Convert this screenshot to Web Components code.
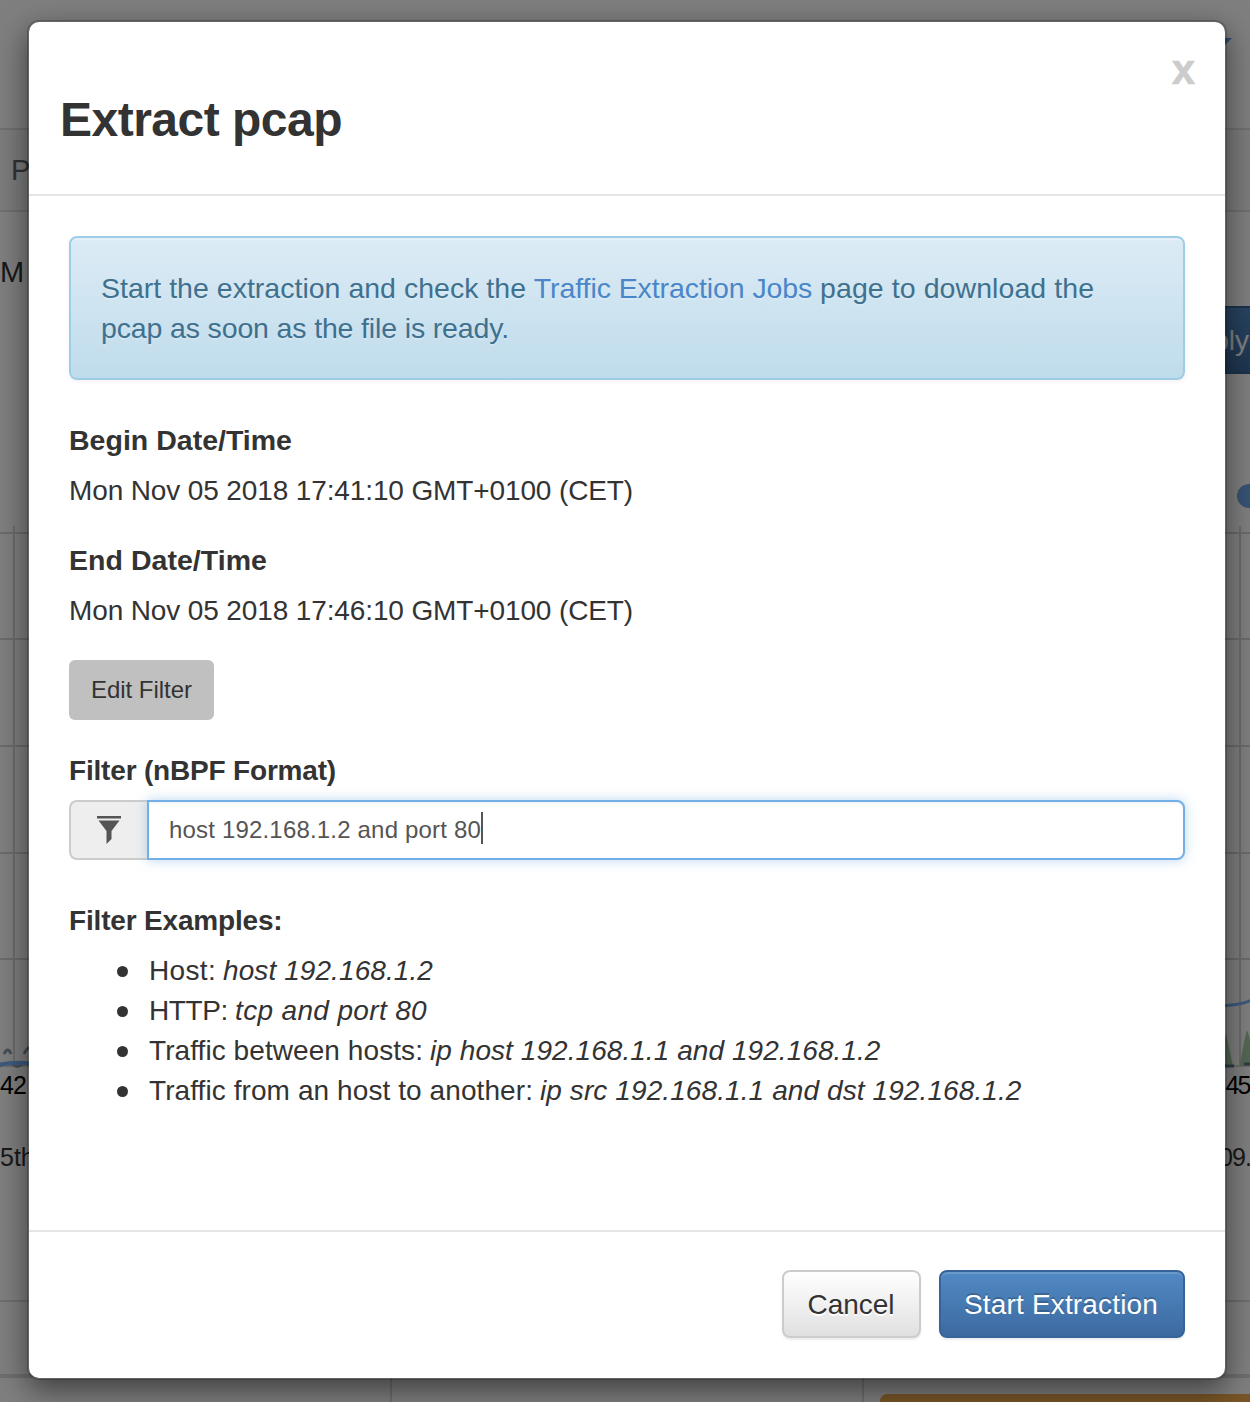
<!DOCTYPE html>
<html lang="en"><head><meta charset="utf-8"><title>Extract pcap</title>
<style>
html,body{margin:0;height:1402px;overflow:hidden;background:#fff}
body{font:28px/40px "Liberation Sans",Arial,sans-serif;color:#333;position:relative}
</style></head><body>
<traffic-page></traffic-page>
<modal-dialog>
  <span slot="title"><fit-text width="282">Extract pcap</fit-text></span>
  <info-alert>
    <div><fit-text width="425" size="28.5">Start the extraction and check the</fit-text><span>&nbsp;</span><a style="color:#4a86c8"><fit-text width="278.5" size="28.5">Traffic Extraction Jobs</fit-text></a><span>&nbsp;</span><fit-text width="274" size="28.5">page to download the</fit-text></div>
    <div><fit-text width="408" size="28.5">pcap as soon as the file is ready.</fit-text></div>
  </info-alert>
  <field-row><fit-text slot="label" width="223" size="28.5">Begin Date/Time</fit-text><fit-text width="564">Mon Nov 05 2018 17:41:10 GMT+0100 (CET)</fit-text></field-row>
  <field-row><fit-text slot="label" width="198" size="28.5">End Date/Time</fit-text><fit-text width="564">Mon Nov 05 2018 17:46:10 GMT+0100 (CET)</fit-text></field-row>
  <ui-button kind="small"><fit-text width="101">Edit Filter</fit-text></ui-button>
  <filter-field><fit-text slot="label" width="267">Filter (nBPF Format)</fit-text><fit-text width="312">host 192.168.1.2 and port 80</fit-text></filter-field>
  <filter-examples>
    <fit-text slot="label" width="213.5">Filter Examples:</fit-text>
    <example-item><fit-text slot="name" width="67">Host:</fit-text><fit-text width="210">host 192.168.1.2</fit-text></example-item>
    <example-item><fit-text slot="name" width="79">HTTP:</fit-text><fit-text width="192">tcp and port 80</fit-text></example-item>
    <example-item><fit-text slot="name" width="274">Traffic between hosts:</fit-text><fit-text width="450.5">ip host 192.168.1.1 and 192.168.1.2</fit-text></example-item>
    <example-item><fit-text slot="name" width="384">Traffic from an host to another:</fit-text><fit-text width="481.5">ip src 192.168.1.1 and dst 192.168.1.2</fit-text></example-item>
  </filter-examples>
  <ui-button slot="footer" kind="default"><fit-text width="87">Cancel</fit-text></ui-button>
  <ui-button slot="footer" kind="primary"><fit-text width="194">Start Extraction</fit-text></ui-button>
</modal-dialog>
<script>
const define=(name,html,init)=>customElements.define(name,class extends HTMLElement{
  constructor(){super();this.attachShadow({mode:'open'}).innerHTML=html}
  connectedCallback(){if(init)init(this)}
});
define('traffic-page',`<style>:host{display:block;position:absolute;inset:0}svg{display:block}text{font-family:"Liberation Sans",Arial,sans-serif}</style>
<svg width="1250" height="1402" viewBox="0 0 1250 1402">
<defs><linearGradient id="b" x2="0" y2="1"><stop stop-color="#5189c5"/><stop offset="1" stop-color="#3c6a9f"/></linearGradient></defs>
<rect y="129" width="1250" height="82" fill="#f8f8f8"/>
<g fill="#e0e0e0"><rect y="128" width="1250" height="2"/><rect y="210" width="1250" height="2"/></g>
<path d="M1210 38h22l-11 11z" fill="#5f9ce0"/>
<text x="11" y="180" font-size="29" fill="#666">P</text><text x="0" y="282" font-size="29" fill="#333">M</text>
<path d="M1150 306h100v68h-100z" fill="url(#b)"/><path d="M1150 307h100" stroke="#36649a" stroke-width="2"/><path d="M1150 373h100" stroke="#36649a" stroke-width="2"/>
<text x="1249" y="350" font-size="28" text-anchor="end" fill="#fff">Apply</text>
<circle cx="1249" cy="496" r="12" fill="#6fa8e8"/>
<g stroke="#d6d6d6" stroke-width="2"><path d="M0 533h1250M0 639h1250M0 746h1250M0 853h1250M0 959h1250M0 1066h1250M14 526v540M1240 526v540"/></g>
<g fill="none" stroke="#8b9cae" stroke-width="3"><path d="M4 1054q4-8 7 0M24 1054q4-9 8-5M-2 1066q4 0 5-3M13 1064q4 5 9 0"/></g>
<path d="M-2 1065Q15 1061 32 1064" fill="none" stroke="#7ab4fb" stroke-width="4"/>
<path d="M1220 1066l6-33 7 33zM1240 1066q4-26 7-36 4 9 8 36z" fill="#a6cfa8"/>
<path d="M1223 1066h11M1244 1064h8" stroke="#657689" stroke-width="3"/>
<path d="M1220 1006Q1242 1005 1252 1000" fill="none" stroke="#7ab4fb" stroke-width="3"/>
<g font-size="25" fill="#000"><text x="0" y="1094" textLength="27">42</text><text x="1225.5" y="1094" textLength="26">45</text></g>
<g font-size="25" fill="#333"><text x="0" y="1166">5th</text><text x="1219" y="1166" textLength="33">09.</text></g>
<path d="M0 1301h1250" stroke="#ddd" stroke-width="2"/><path d="M0 1376h1250" stroke="#ddd" stroke-width="4"/><path d="M391 1378v24M863 1378v24" stroke="#ddd" stroke-width="2"/>
<path d="M880 1402q0-8 8-8h362v8z" fill="#f0ad4e"/>
</svg>`);
define('modal-dialog',`<style>
:host{display:flex;position:absolute;inset:0;background:rgba(0,0,0,.5);padding:20px 23px 22px 27px;box-sizing:border-box}
section{flex:1;display:flex;flex-direction:column;background:#fff;background-clip:padding-box;border:2px solid rgba(0,0,0,.2);border-radius:12px;box-shadow:0 10px 30px rgba(0,0,0,.5);box-sizing:border-box}
header{height:174px;box-sizing:border-box;border-bottom:2px solid #e5e5e5;padding:27px 30px 30px;display:flex;flex-direction:column}
.x{align-self:flex-end;font:bold 42px/42px "Liberation Sans",Arial,sans-serif;height:42px;color:#ccc;-webkit-text-stroke:.6px #ccc}
h3{margin:3px 0 0 1px;font-size:48px;line-height:52px;font-weight:bold}
main{flex:1;padding:40px;display:flex;flex-direction:column;align-items:stretch}
footer{height:148px;box-sizing:border-box;border-top:2px solid #e5e5e5;padding:38px 40px 40px;display:flex;justify-content:flex-end;gap:18px}
</style><section><header><span class="x">x</span><h3><slot name="title"></slot></h3></header><main><slot></slot></main><footer><slot name="footer"></slot></footer></section>`);
define('info-alert',`<style>:host{display:block;height:144px;box-sizing:border-box;padding:30px;border:2px solid #9fcde8;border-radius:8px;background:linear-gradient(#dcebf5,#bfdcec);color:#3f718f;text-shadow:0 2px 0 rgba(255,255,255,.2);box-shadow:inset 0 2px 0 rgba(255,255,255,.25),0 2px 4px rgba(0,0,0,.05);margin-bottom:40px;white-space:nowrap}</style><slot></slot>`);
define('field-row',`<style>:host{display:flex;flex-direction:column;margin-bottom:30px;height:90px}b{height:51px}div{height:39px}</style><b><slot name="label"></slot></b><div><slot></slot></div>`);
define('ui-button',`<style>
:host{display:flex;align-items:center;justify-content:center;box-sizing:border-box;border-radius:8px;height:68px}
:host([kind=small]){width:145px;height:60px;flex:none;background:silver;border-radius:6px;font-size:24px;margin-bottom:30px}
:host([kind=default]){width:139px;border:2px solid #ccc;padding:1px 1px 0 0;background:linear-gradient(#fff,#e0e0e0);text-shadow:0 2px 0 #fff;box-shadow:inset 0 2px 0 rgba(255,255,255,.15),0 2px 2px rgba(0,0,0,.075)}
:host([kind=primary]){width:246px;border:2px solid #36649a;padding:1px 2px 0 0;background:linear-gradient(#5189c5,#3c6a9f);color:#fff;text-shadow:0 -2px 0 rgba(0,0,0,.2);box-shadow:inset 0 2px 0 rgba(255,255,255,.15),0 2px 2px rgba(0,0,0,.075)}
</style><slot></slot>`);
define('filter-field',`<style>
:host{display:flex;flex-direction:column;margin-bottom:40px;height:110px}
b{height:50px;padding-top:1px;box-sizing:border-box}.g{display:flex;height:60px}
.i{width:78px;box-sizing:border-box;border:2px solid #ccc;border-right:0;border-radius:8px 0 0 8px;background:#eee;display:flex;align-items:center;justify-content:center}
.v{flex:1;display:flex;align-items:center;border:2px solid #73aee6;border-radius:0 8px 8px 0;background:#fff;padding-left:20px;font-size:24px;color:#555;box-shadow:inset 0 2px 2px rgba(0,0,0,.04),0 0 12px rgba(115,174,230,.5)}
.c{width:2px;height:32px;background:#555;margin-bottom:4px}
</style><b><slot name="label"></slot></b><div class="g"><span class="i"><svg width="24" height="28" viewBox="0 0 24 28" fill="#555"><path d="M0 0h24v2.5H0zM1.5 4.5h21L14.5 15v8L9.5 28V15z"/></svg></span><span class="v"><slot></slot><span class="c"></span></span></div>`);
define('filter-examples',`<style>:host{display:flex;flex-direction:column;gap:10px;padding-top:1px}b{height:40px}ul{margin:0;padding:0 0 0 48px}</style><b><slot name="label"></slot></b><ul><slot></slot></ul>`);
define('example-item',`<style>:host{display:flex;align-items:center;height:40px;white-space:nowrap}.d{width:11px;height:11px;border-radius:50%;background:#333;margin:1px 21px 0 0}div{display:flex;gap:7px}i{font-style:italic}</style><span class="d"></span><div><slot name="name"></slot><i><slot></slot></i></div>`);
/* Spreads its text over a given advance width. */
define('fit-text',`<style>:host{display:inline-block;white-space:nowrap;vertical-align:top}</style><span><slot></slot></span>`,el=>{
  if(el.hasAttribute('size'))el.style.fontSize=el.getAttribute('size')+'px';
  const n=el.textContent.length, w=el.shadowRoot.querySelector('span').getBoundingClientRect().width;
  el.style.letterSpacing=((+el.getAttribute('width')-w)/n)+'px';
});
</script>
</body></html>
